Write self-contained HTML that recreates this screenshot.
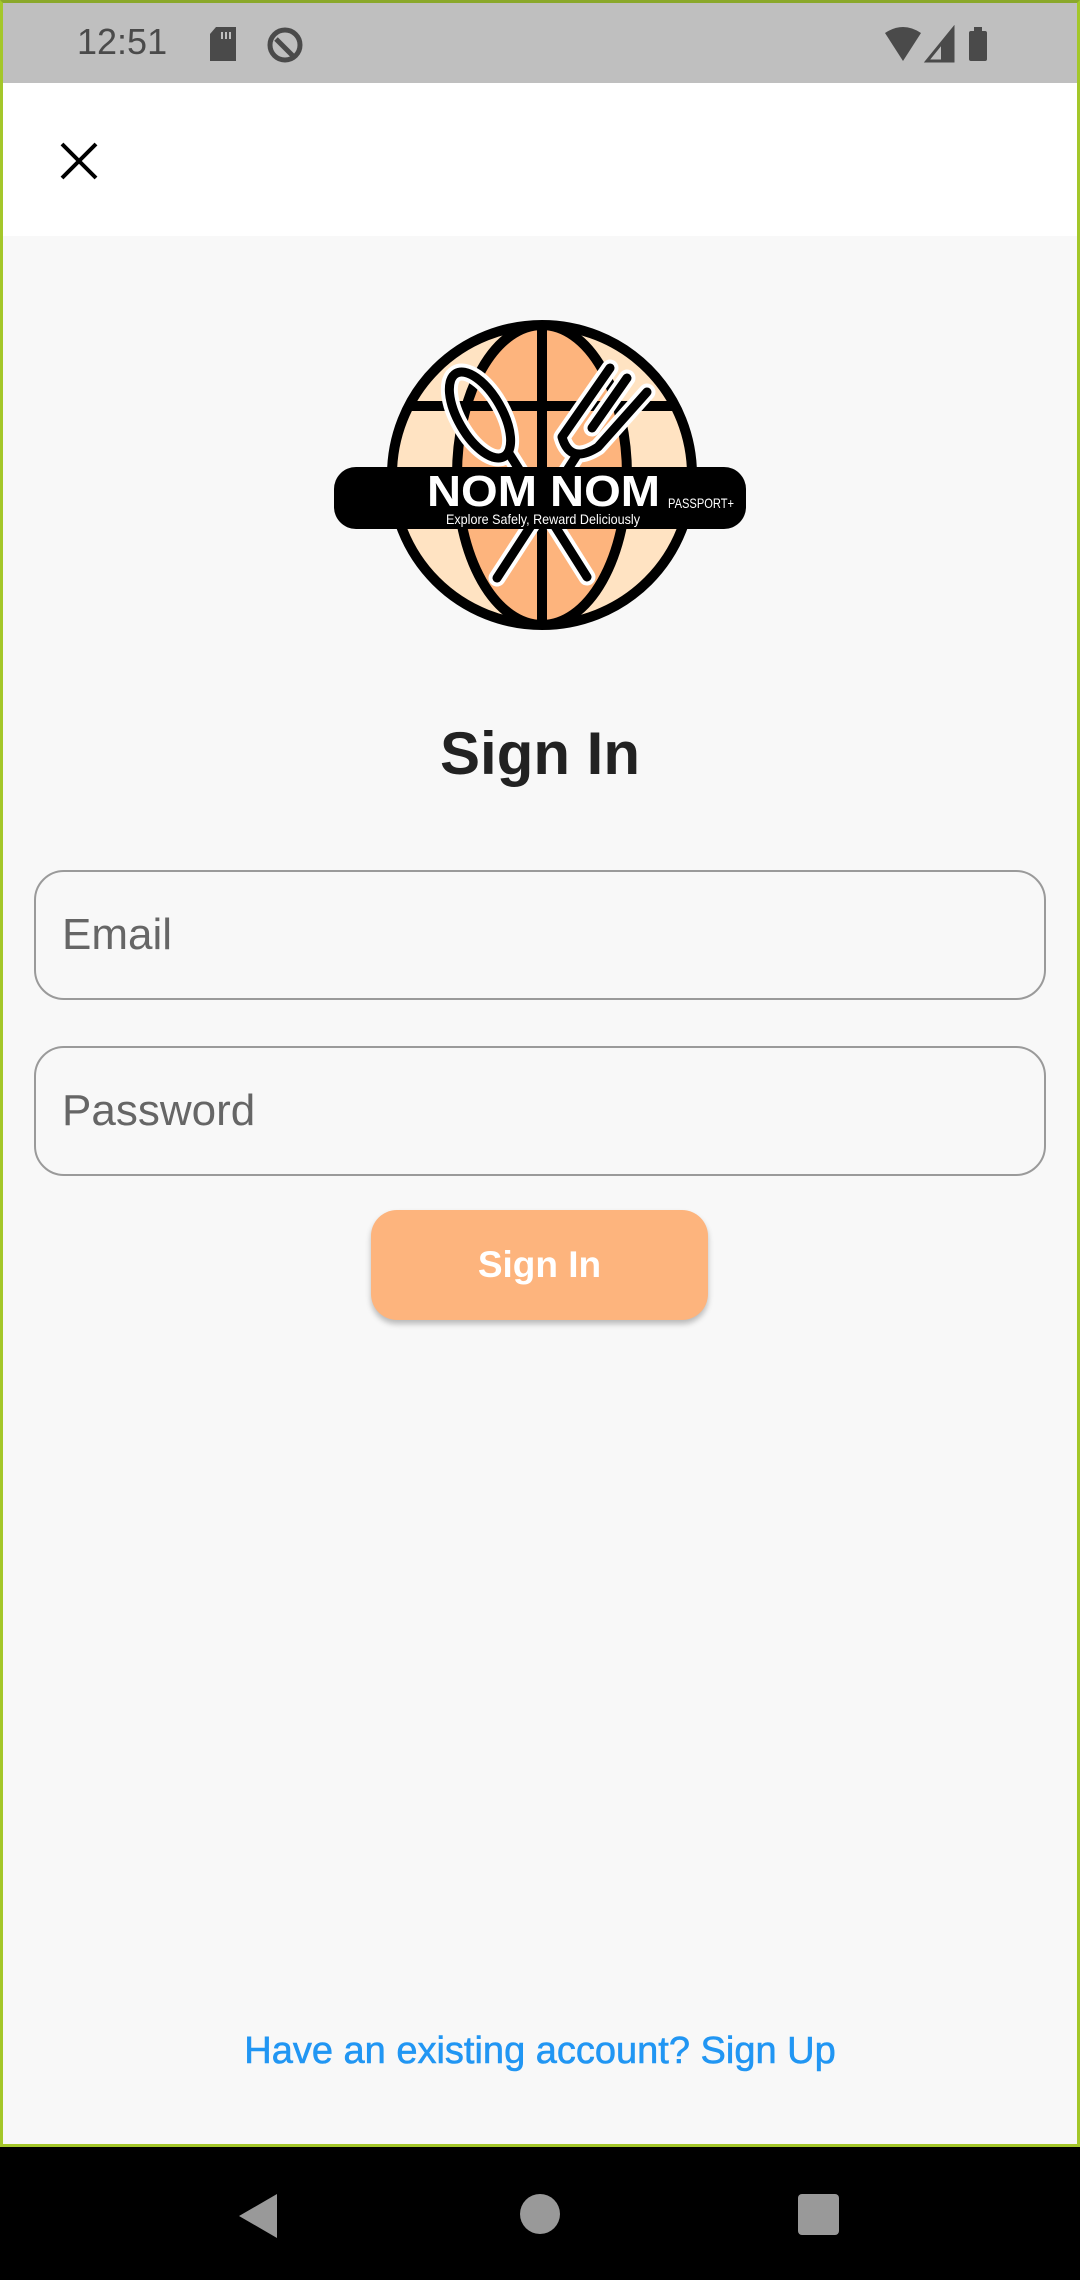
<!DOCTYPE html>
<html><head><meta charset="utf-8"><style>
*{margin:0;padding:0;box-sizing:border-box}
body{width:1080px;height:2280px;position:relative;background:#f8f8f8;font-family:"Liberation Sans",sans-serif;overflow:hidden}
.frame{position:absolute;left:0;top:0;width:1080px;height:2147px;border:3px solid #a4c72a;border-top-color:#8aa82a}
.status{position:absolute;left:3px;top:3px;width:1074px;height:80px;background:#bfbfbf}
.appbar{position:absolute;left:3px;top:83px;width:1074px;height:153px;background:#fff}
.nav{position:absolute;left:0;top:2147px;width:1080px;height:133px;background:#000}
.field{position:absolute;left:34px;width:1012px;border:2.5px solid #9a9a9a;border-radius:30px}
.field span{position:absolute;left:26px;top:50%;transform:translateY(-50%);font-size:44px;color:#666}
</style></head><body>
<div class="frame"></div>
<div class="status">
<div style="position:absolute;left:74px;top:18px;font-size:36px;color:#4a4a4a">12:51</div>
<svg style="position:absolute;left:205px;top:23px" width="30" height="36"><path d="M8 1h20v34H2V8z" fill="#4a4a4a"/><rect x="13" y="6" width="2" height="7" fill="#bfbfbf"/><rect x="17" y="6" width="2" height="7" fill="#bfbfbf"/><rect x="21" y="6" width="2" height="7" fill="#bfbfbf"/></svg>
<svg style="position:absolute;left:262px;top:22px" width="40" height="40"><circle cx="20" cy="20" r="15" fill="none" stroke="#4a4a4a" stroke-width="5"/><path d="M11 14l18 18" stroke="#4a4a4a" stroke-width="5"/></svg>
<svg style="position:absolute;left:880px;top:22px" width="110" height="40"><path d="M2 8Q20 -4 38 8L20 36z" fill="#4a4a4a"/><path d="M44 36L70 4V36z" fill="none" stroke="#4a4a4a" stroke-width="3"/><path d="M58 20L70 6V36H58z" fill="#4a4a4a"/><rect x="86" y="6" width="18" height="30" rx="2" fill="#4a4a4a"/><rect x="91" y="2" width="8" height="6" fill="#4a4a4a"/></svg>
</div>
<div class="appbar">
<svg style="position:absolute;left:56px;top:58px" width="40" height="40"><path d="M3 3L37 37M37 3L3 37" stroke="#000" stroke-width="4"/></svg>
</div>
<svg style="position:absolute;left:330px;top:315px" width="420" height="320" viewBox="0 0 420 320">
<clipPath id="c"><circle cx="212" cy="160" r="150"/></clipPath>
<circle cx="212" cy="160" r="150" fill="#ffe3c2"/>
<ellipse cx="212" cy="160" rx="85" ry="150" fill="#fdb47d" clip-path="url(#c)"/>
<g clip-path="url(#c)" stroke="#000" stroke-width="10" fill="none">
<ellipse cx="212" cy="160" rx="85" ry="150"/>
<path d="M212 0V320M40 91H400"/>
</g>
<circle cx="212" cy="160" r="150" fill="none" stroke="#000" stroke-width="10"/>
<g stroke="#fff" stroke-width="17" fill="none" stroke-linecap="round" stroke-linejoin="round">
<ellipse cx="150" cy="100" rx="22" ry="48" transform="rotate(-30 150 100)"/>
<path d="M180 140L257 262M167 263L247 140M280 53L232 122Q240 150 268 132L317 77M297 63L262 113"/>
</g>
<g stroke="#000" stroke-width="9" fill="none" stroke-linecap="round" stroke-linejoin="round">
<ellipse cx="150" cy="100" rx="22" ry="48" transform="rotate(-30 150 100)"/>
<path d="M180 140L257 262M167 263L247 140M280 53L232 122Q240 150 268 132L317 77M297 63L262 113"/>
</g>
<rect x="4" y="152" width="412" height="62" rx="22" fill="#000"/>
<text x="97" y="191" font-family="Liberation Sans" font-weight="bold" font-size="44" fill="#fff" textLength="233" lengthAdjust="spacingAndGlyphs">NOM NOM</text>
<text x="338" y="193" font-family="Liberation Sans" font-size="14" fill="#fff" textLength="66" lengthAdjust="spacingAndGlyphs">PASSPORT+</text>
<text x="116" y="209" font-family="Liberation Sans" font-size="14" fill="#fff" textLength="194" lengthAdjust="spacingAndGlyphs">Explore Safely, Reward Deliciously</text>
</svg>
<div style="position:absolute;left:0;width:1080px;top:719px;text-align:center;font-size:60px;font-weight:bold;color:#222">Sign In</div>
<div class="field" style="top:870px;height:130px"><span>Email</span></div>
<div class="field" style="top:1046px;height:130px"><span>Password</span></div>
<div style="position:absolute;left:371px;top:1210px;width:337px;height:110px;background:#fdb47d;border-radius:26px;box-shadow:0 4px 6px rgba(0,0,0,.25);color:#fff;font-weight:bold;font-size:37px;text-align:center;line-height:110px">Sign In</div>
<div style="position:absolute;left:0;width:1080px;top:2030px;text-align:center;font-size:38px;color:#2196f3;-webkit-text-stroke:0.6px #2196f3">Have an existing account? Sign Up</div>
<div class="nav">
<svg style="position:absolute;left:235px;top:45px" width="45" height="48"><path d="M42 2V46L4 24z" fill="#999"/></svg>
<div style="position:absolute;left:520px;top:47px;width:40px;height:40px;border-radius:50%;background:#999"></div>
<div style="position:absolute;left:798px;top:47px;width:41px;height:41px;border-radius:4px;background:#999"></div>
</div>
</body></html>
